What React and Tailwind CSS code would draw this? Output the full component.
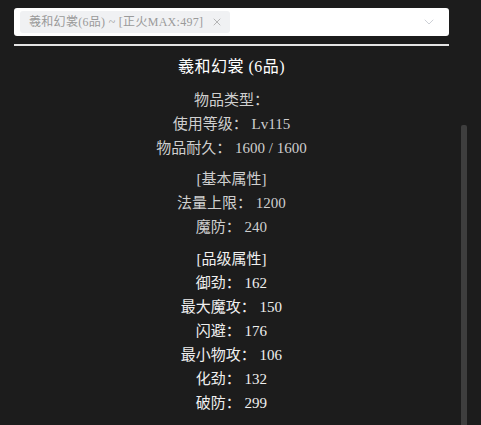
import { X, ChevronDown } from "lucide-react";

const font = { fontFamily: '"Liberation Serif", "Noto Sans CJK SC", serif' };

const baseInfo = ["物品类型：", "使用等级： Lv115", "物品耐久： 1600 / 1600"];
const baseAttrs = ["法量上限： 1200", "魔防： 240"];
const gradeAttrs = ["御劲： 162", "最大魔攻： 150", "闪避： 176", "最小物攻： 106", "化劲： 132", "破防： 299"];

const App = () => {
  return (
    <div className="h-[425px] w-[481px] overflow-hidden bg-[#1c1c1c] pt-[8px] pl-[14px]" style={font}>
      <div className="flex">
        <div className="w-[435px]">
          {/* Select */}
          <div className="flex h-[28px] items-center rounded-[3px] bg-white pl-[6px] pr-[12px]">
            <div className="flex h-[22px] items-center gap-[8px] rounded-[3px] bg-[#f0f1f3] pl-[9px] pr-[7px] text-[12px] tracking-[0.3px] text-[#9a9a9a]">
              <span>羲和幻裳(6品) ~ [正火MAX:497]</span>
              <X size={12} strokeWidth={1.5} className="text-[#a0a0a0]" />
            </div>
            <div className="flex-1" />
            <ChevronDown size={16} strokeWidth={1.2} className="text-[#c0c4cc]" />
          </div>
          <div className="mt-[8px] h-[2px] bg-[#e4e4e4]" />

          {/* Item detail */}
          <div className="text-center text-[15px] leading-[24px]">
            <div className="mt-[9px] text-[16px] tracking-[0.5px] text-white">羲和幻裳 (6品)</div>
            <div className="mt-[9px] text-[#cfcfcf]">
              {baseInfo.map((t) => (
                <div key={t}>{t}</div>
              ))}
            </div>
            <div className="mt-[7px] text-[#cfcfcf]">
              <div>[基本属性]</div>
              {baseAttrs.map((t) => (
                <div key={t}>{t}</div>
              ))}
            </div>
            <div className="mt-[8px] text-[#efefef]">
              <div>[品级属性]</div>
              {gradeAttrs.map((t) => (
                <div key={t}>{t}</div>
              ))}
            </div>
          </div>
        </div>

        {/* Scrollbar */}
        <div className="ml-[12px] pt-[117px]">
          <div className="h-[320px] w-[6px] rounded-t-[2px] bg-[#3e3e3e]" />
        </div>
      </div>
    </div>
  );
};

export default App;
